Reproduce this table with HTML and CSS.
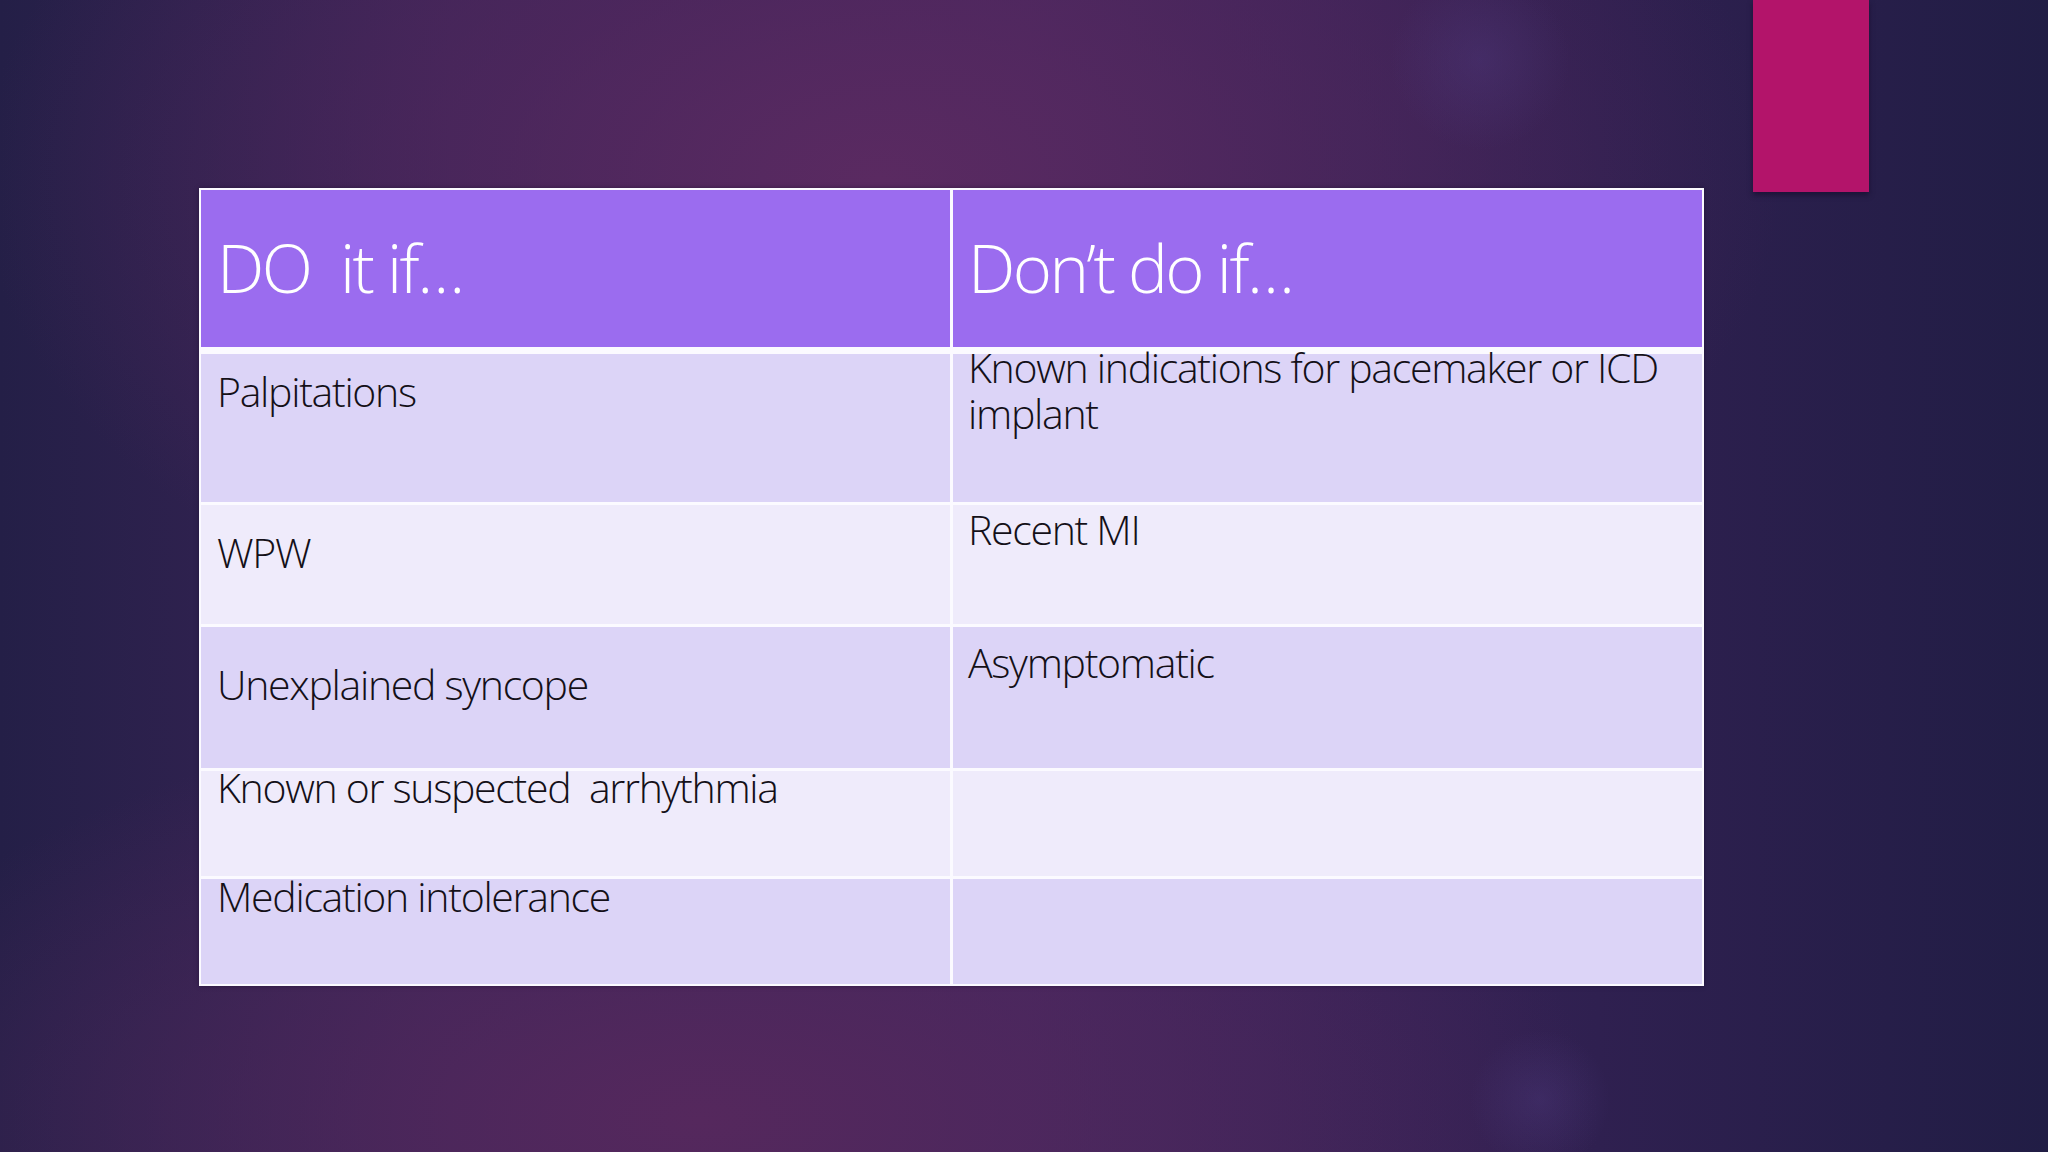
FILE: index.html
```html
<!DOCTYPE html>
<html lang="en">
<head>
<meta charset="utf-8">
<title>DO it if / Don't do if</title>
<link rel="stylesheet" href="styles.css">
</head>
<body>
<div class="slide">
  <div class="accent"></div>
  <div class="grid">
    <div class="cell head"><p class="h">DO&nbsp; it if…</p></div>
    <div class="cell head"><p class="h">Don’t do if…</p></div>
    <div class="cell odd r1"><p class="t p-palp">Palpitations</p></div>
    <div class="cell odd r1"><p class="t p-known">Known indications for pacemaker or ICD implant</p></div>
    <div class="cell even r2"><p class="t p-wpw">WPW</p></div>
    <div class="cell even r2"><p class="t p-mi">Recent MI</p></div>
    <div class="cell odd r3"><p class="t p-sync">Unexplained syncope</p></div>
    <div class="cell odd r3"><p class="t p-asym">Asymptomatic</p></div>
    <div class="cell even r4"><p class="t p-arr">Known or suspected&nbsp; arrhythmia</p></div>
    <div class="cell even r4"></div>
    <div class="cell odd r5"><p class="t p-med">Medication intolerance</p></div>
    <div class="cell odd r5"></div>
  </div>
</div>
</body>
</html>
```
FILE: styles.css
```css
html, body {
  margin: 0;
  padding: 0;
}
body {
  width: 2048px;
  height: 1152px;
  overflow: hidden;
  font-family: "Open Sans", "Noto Sans", "Liberation Sans", sans-serif;
}
.slide {
  position: relative;
  width: 2048px;
  height: 1152px;
  box-sizing: border-box;
  padding: 188px 0 0 199px;
  background:
    radial-gradient(circle at 1480px 60px, rgba(80, 60, 130, 0.35) 0, rgba(80, 60, 130, 0) 90px),
    radial-gradient(circle at 1540px 1100px, rgba(80, 60, 130, 0.35) 0, rgba(80, 60, 130, 0) 70px),
    radial-gradient(ellipse 900px 520px at 880px 180px, #5a2a61 0%, rgba(84, 40, 94, 0.6) 45%, rgba(84, 40, 94, 0) 100%),
    radial-gradient(ellipse 900px 420px at 700px 1120px, #55285d 0%, rgba(80, 40, 92, 0.6) 45%, rgba(80, 40, 92, 0) 100%),
    linear-gradient(90deg, #241f47 0%, #3b2457 22%, #452660 50%, #2f2050 78%, #211d45 100%);
}
.accent {
  position: absolute;
  left: 1753px;
  top: 0;
  width: 116px;
  height: 192px;
  background: #b3146a;
  box-shadow: 0 3px 5px rgba(20, 10, 40, 0.6);
}
.grid {
  display: grid;
  grid-template-columns: 749px 749px;
  grid-template-rows: 161px 148px 119px 141px 105px 105px;
  column-gap: 3px;
  row-gap: 3px;
  padding: 2px;
  width: max-content;
  background: #fbfaff;
  box-shadow: 0 0 4px rgba(20, 10, 40, 0.5);
}
.cell {
  box-sizing: border-box;
  padding-left: 16px;
  overflow: visible;
}
.head {
  background: #9b6cef;
  margin-bottom: 4px;
}
.odd { background: #dcd4f7; }
.even { background: #efebfb; }
.h {
  margin: 37px 0 0 0;
  font-size: 67px;
  line-height: 80px;
  font-weight: 300;
  color: #ffffff;
  letter-spacing: -2.6px;
  white-space: nowrap;
}
.t {
  margin: 0;
  font-size: 41px;
  line-height: 46px;
  font-weight: 300;
  color: #141018;
  letter-spacing: -1.3px;
}
.cell:nth-child(2n) { padding-left: 15px; }
.p-palp { margin-top: 14px; }
.p-known { margin-top: -10px; }
.p-wpw { margin-top: 24px; }
.p-mi { margin-top: 1px; }
.p-sync { margin-top: 34px; }
.p-asym { margin-top: 12px; }
.p-arr { margin-top: -7px; white-space: nowrap; }
.p-med { margin-top: -6px; }
```
